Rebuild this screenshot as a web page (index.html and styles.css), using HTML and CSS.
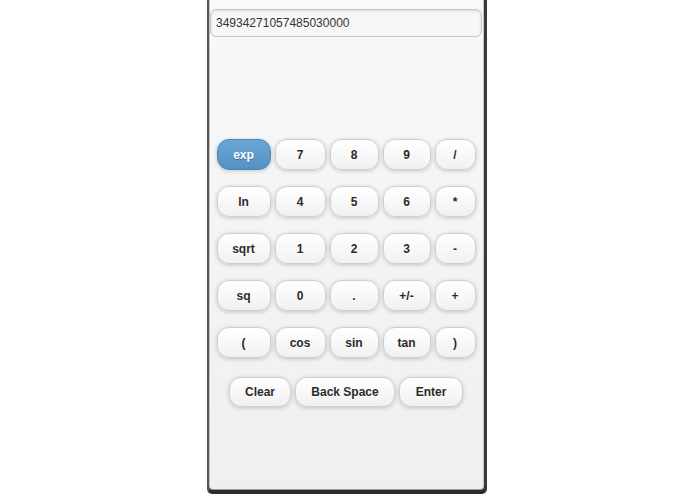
FILE: index.html
```html
<!DOCTYPE html>
<html>
<head>
<meta charset="utf-8">
<link rel="stylesheet" href="styles.css">
</head>
<body>
<div class="frame">
  <div class="screen">
    <div class="display">34934271057485030000</div>
    <div class="keys">
      <button class="key key-active">exp</button>
      <button class="key">7</button>
      <button class="key">8</button>
      <button class="key">9</button>
      <button class="key">/</button>
      <button class="key">ln</button>
      <button class="key">4</button>
      <button class="key">5</button>
      <button class="key">6</button>
      <button class="key">*</button>
      <button class="key">sqrt</button>
      <button class="key">1</button>
      <button class="key">2</button>
      <button class="key">3</button>
      <button class="key">-</button>
      <button class="key">sq</button>
      <button class="key">0</button>
      <button class="key">.</button>
      <button class="key">+/-</button>
      <button class="key">+</button>
      <button class="key">(</button>
      <button class="key">cos</button>
      <button class="key">sin</button>
      <button class="key">tan</button>
      <button class="key">)</button>
    </div>
    <div class="actions">
      <button class="key key-clear">Clear</button>
      <button class="key key-back">Back Space</button>
      <button class="key key-enter">Enter</button>
    </div>
  </div>
</div>
</body>
</html>
```
FILE: styles.css
```css
html, body {
  margin: 0;
  padding: 0;
  background: #ffffff;
}
body {
  width: 695px;
  height: 494px;
  overflow: hidden;
  font-family: "Liberation Sans", Arial, sans-serif;
}
.frame {
  box-sizing: border-box;
  margin-left: 207px;
  width: 280px;
  height: 494px;
  border-left: 2px solid #555;
  border-right: 3px solid #3a3a3a;
  border-bottom: 4px solid #2c2c2c;
  border-radius: 0 0 5px 5px;
  background: #333;
}
.screen {
  box-sizing: border-box;
  height: 100%;
  background: linear-gradient(#f9f9f9, #efefef);
  border-left: 1px solid #c4c4c4;
  border-right: 1px solid #c4c4c4;
  border-bottom: 1px solid #9a9a9a;
  border-radius: 0 0 4px 4px;
  padding: 9px 1px 0 0;
}
.display {
  box-sizing: border-box;
  height: 28px;
  padding: 0 5px;
  border: 1px solid #c6c6c6;
  border-radius: 6px;
  background: #f7f7f7;
  box-shadow: inset 0 1px 3px rgba(0,0,0,0.12);
  font-size: 12px;
  line-height: 26px;
  color: #333;
}
.keys {
  display: grid;
  grid-template-columns: 54px 51px 49px 48px 41px;
  grid-auto-rows: 31px;
  column-gap: 4px;
  row-gap: 16px;
  justify-content: center;
  margin-top: 102px;
}
.key {
  box-sizing: border-box;
  margin: 0;
  padding: 0;
  border: 1px solid #cfcfcf;
  border-radius: 12px;
  background: linear-gradient(#ffffff, #f1f1f1);
  box-shadow: 0 1px 4px rgba(0,0,0,0.2);
  font-family: "Liberation Sans", Arial, sans-serif;
  font-weight: bold;
  font-size: 12px;
  color: #2a2a2a;
  text-shadow: 0 1px 0 #fff;
  height: 31px;
}
.key-active {
  border-color: #4a86b8;
  background: linear-gradient(#6aa6d4, #5591c3);
  color: #fff;
  text-shadow: 0 1px 0 #3a6e99;
}
.actions {
  display: flex;
  justify-content: center;
  gap: 4px;
  margin-top: 19px;
}
.key-clear { width: 62px; height: 30px; }
.key-back { width: 100px; height: 30px; }
.key-enter { width: 64px; height: 30px; }
```
